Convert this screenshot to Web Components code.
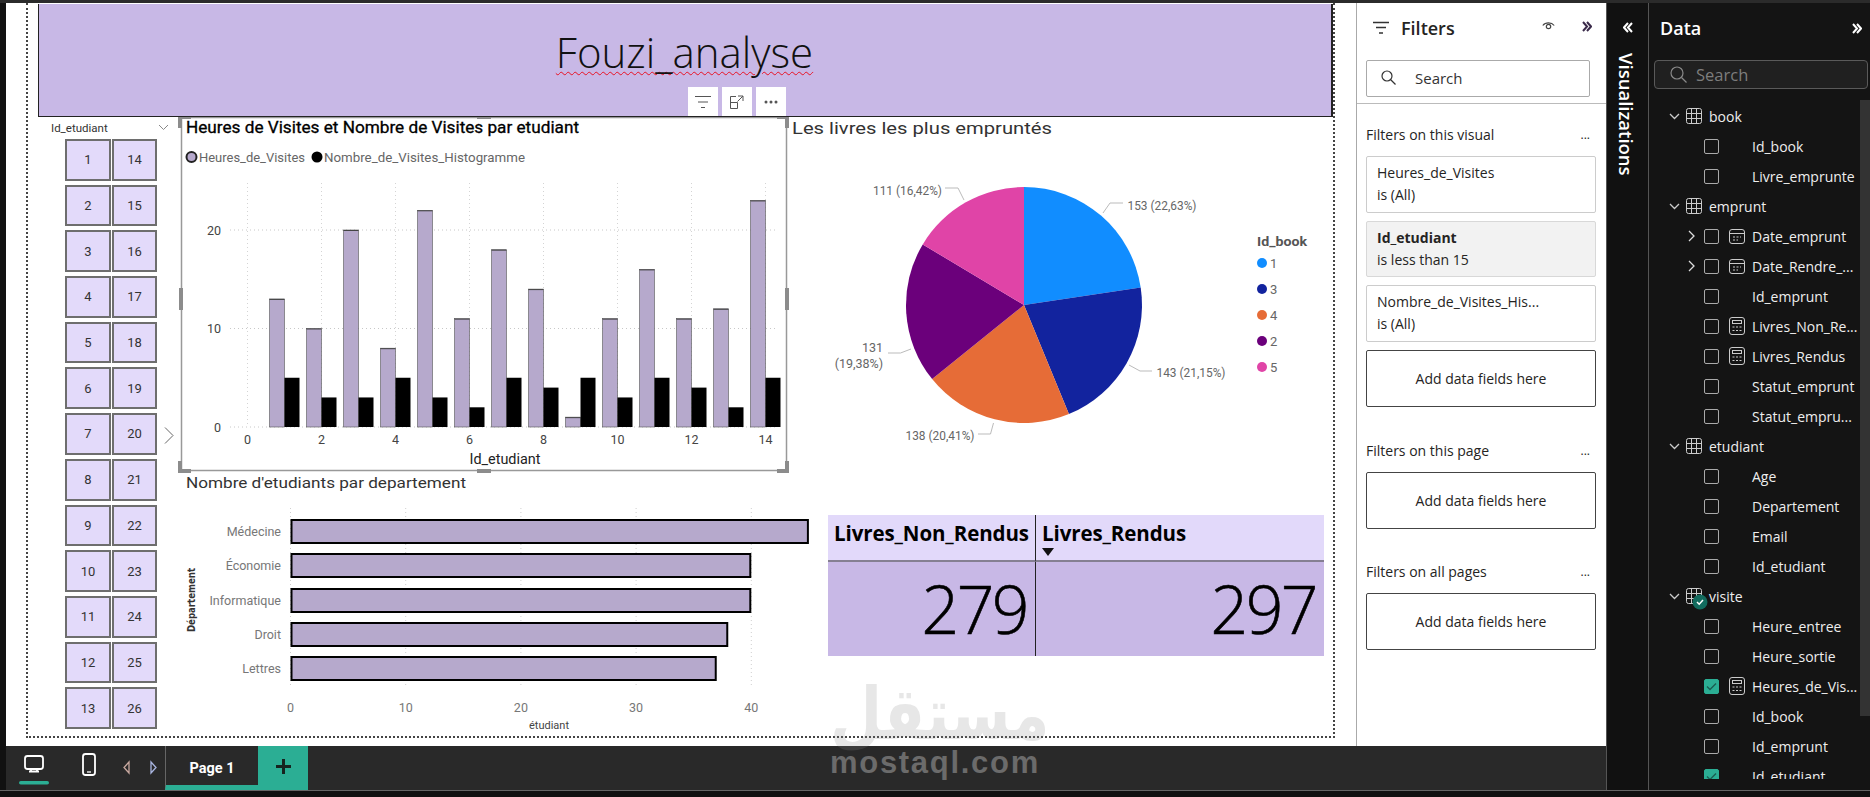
<!DOCTYPE html>
<html>
  <head>
    <meta charset="utf-8">
    <title>Fouzi_analyse</title>
    <style>
      html, body { margin: 0; padding: 0; background: #111; overflow: hidden; }
      body { width: 1870px; height: 797px; font-family: "Open Sans", "Liberation Sans", sans-serif; }
    </style>
  </head>
  <body>
    <pbi-app>
      <pbi-canvas slot="canvas"></pbi-canvas>
      <pbi-filters slot="filters"></pbi-filters>
      <pbi-status slot="status"></pbi-status>
      <pbi-viz-rail slot="rail"></pbi-viz-rail>
      <pbi-data slot="data">
        <pbi-table>book</pbi-table>
        <pbi-field>Id_book</pbi-field>
        <pbi-field>Livre_emprunte</pbi-field>
        <pbi-table>emprunt</pbi-table>
        <pbi-field icon="cal" expand>Date_emprunt</pbi-field>
        <pbi-field icon="cal" expand>Date_Rendre_...</pbi-field>
        <pbi-field>Id_emprunt</pbi-field>
        <pbi-field icon="calc">Livres_Non_Re...</pbi-field>
        <pbi-field icon="calc">Livres_Rendus</pbi-field>
        <pbi-field>Statut_emprunt</pbi-field>
        <pbi-field>Statut_empru...</pbi-field>
        <pbi-table>etudiant</pbi-table>
        <pbi-field>Age</pbi-field>
        <pbi-field>Departement</pbi-field>
        <pbi-field>Email</pbi-field>
        <pbi-field>Id_etudiant</pbi-field>
        <pbi-table badge>visite</pbi-table>
        <pbi-field>Heure_entree</pbi-field>
        <pbi-field>Heure_sortie</pbi-field>
        <pbi-field icon="calc" checked>Heures_de_Vis...</pbi-field>
        <pbi-field>Id_book</pbi-field>
        <pbi-field>Id_emprunt</pbi-field>
        <pbi-field checked>Id_etudiant</pbi-field>
      </pbi-data>
    </pbi-app>
  <script>
  const DIN = '"Roboto", "Liberation Sans", sans-serif';
  const UI = '"Open Sans", "Liberation Sans", sans-serif';

  function shadow (el, html) {
    const root = el.attachShadow({mode: 'open'});
    root.innerHTML = html;
    return root;
  }

  // svg text, w forces the width measured on the reference
  function txt (x, y, str, o) {
    o = o || {};
    return '<text x="' + x + '" y="' + y + '" dominant-baseline="central"' +
      ' font-size="' + (o.size || 12) + '" fill="' + (o.fill || '#666') + '"' +
      ' text-anchor="' + (o.anchor || 'start') + '"' +
      (o.weight ? ' font-weight="' + o.weight + '"' : '') +
      (o.w ? ' textLength="' + o.w + '" lengthAdjust="spacingAndGlyphs"' : '') +
      (o.extra || '') + '>' + str + '</text>';
  }

  function chevrons (dir, color) {
    var d = dir === 'right' ? 'M1 1l4 4.500-4 4.500M5 1l4 4.500-4 4.500' : 'M5 1L1 5.500l4 4.500M9 1L5 5.500l4 4.500';
    return '<svg style="display:block" width="10" height="11" viewBox="0 0 10 11" fill="none" stroke="' + color + '" stroke-width="2"><path d="' + d + '"/></svg>';
  }

  class PbiApp extends HTMLElement {
    constructor () {
      super();
      shadow(this, `
        <style>
          :host { display: block; position: relative; width: 1870px; height: 797px; background: #111; overflow: hidden; }
          .top { height: 3px; background: #2b2b2b; }
          .main { display: flex; height: 787px; border-bottom: 1px solid #666; box-sizing: content-box; }
          .left { width: 1606px; display: flex; flex-direction: column; }
          .upper { display: flex; height: 743px; background: #111; padding-left: 6px; }
          .mark { position: absolute; left: 830px; top: 684px; width: 209px; text-align: center; pointer-events: none; }
          .ar { font: bold 60px/60px "DejaVu Sans", sans-serif; color: #8a8a8a; opacity: .2; height: 60px; transform: scaleY(1.2); white-space: nowrap; }
          .en { font: bold 31px/30px "Liberation Sans", sans-serif; letter-spacing: 1.700px; color: #6b6b6b; margin-top: 4px; white-space: nowrap; }
        </style>
        <div class="top"></div>
        <div class="main">
          <div class="left">
            <div class="upper"><slot name="canvas"></slot><slot name="filters"></slot></div>
            <slot name="status"></slot>
          </div>
          <slot name="rail"></slot>
          <slot name="data"></slot>
        </div>
        <div class="mark"><div class="ar">مستقل</div><div class="en">mostaql.com</div></div>
      `);
    }
  }

  class PbiCanvas extends HTMLElement {
    constructor () {
      super();
      shadow(this, `
        <style>
          :host { display: block; width: 1350px; height: 743px; background: #fff; }
          .page { margin-left: 20px; width: 1309px; height: 735px; box-sizing: border-box; padding: 1px 0 0 10px;
                  border-left: 2px dotted #444; border-right: 2px dotted #444; border-bottom: 2px dotted #444; }
          .grid { display: grid; grid-template-columns: 143px 606px 41px 505px; grid-template-rows: 354px 44px 220px; }
          pbi-slicer { grid-column: 1; grid-row: 1 / 4; }
          pbi-column-chart { grid-column: 2; grid-row: 1; }
          pbi-pie-chart { grid-column: 3 / 5; grid-row: 1; }
          pbi-bar-chart { grid-column: 2 / 4; grid-row: 2 / 4; }
          pbi-matrix { grid-column: 4; grid-row: 3; }
        </style>
        <div class="page">
          <pbi-banner></pbi-banner>
          <div class="grid">
            <pbi-slicer></pbi-slicer>
            <pbi-column-chart></pbi-column-chart>
            <pbi-pie-chart></pbi-pie-chart>
            <pbi-bar-chart></pbi-bar-chart>
            <pbi-matrix></pbi-matrix>
          </div>
        </div>
      `);
    }
  }

  class PbiBanner extends HTMLElement {
    constructor () {
      super();
      shadow(this, `
        <style>
          :host { display: block; position: relative; height: 113px; box-sizing: border-box; background: #c8b8e6;
                  border: 1px solid #222; border-top: 0; border-right: 2px solid #222; }
          .title { text-align: center; padding: 21px 0 0 0; margin-left: -1px; font: 300 42px/54px ${UI}; color: #111; }
          .title span { text-decoration: underline wavy #e81123 1.200px; text-underline-offset: 3px; }
          .tools { position: absolute; left: 649px; bottom: 0; display: flex; gap: 4px; }
          .tools div { width: 30px; height: 29px; background: #fff; display: flex; align-items: center; justify-content: center; }
        </style>
        <div class="title"><span>Fouzi_analyse</span></div>
        <div class="tools">
          <div><svg width="16" height="14" fill="none" stroke="#555"><path d="M0 1.500h16M3 7h10M6 12.500h4"/></svg></div>
          <div><svg width="16" height="16" fill="none" stroke="#555"><path d="M7 2.500H1.500v12h7v-6h-7M9 2h5v5M14 2L8.500 7.500"/></svg></div>
          <div><svg width="14" height="4" fill="#555"><circle cx="2" cy="2" r="1.500"/><circle cx="7" cy="2" r="1.500"/><circle cx="12" cy="2" r="1.500"/></svg></div>
        </div>
      `);
    }
  }

  class PbiSlicer extends HTMLElement {
    constructor () {
      super();
      var tiles = '';
      for (let i = 1; i <= 26; i++) tiles += '<div class="tile">' + i + '</div>';
      shadow(this, `
        <style>
          :host { display: block; position: relative; font-family: ${DIN}; }
          .head { height: 22px; padding-left: 13px; font-size: 11.500px; line-height: 22px; color: #333; }
          .chev { position: absolute; left: 120px; top: 7px; }
          .tiles { display: grid; grid-auto-flow: column; grid-template-columns: 46px 45px; grid-template-rows: repeat(13, 1fr);
                   column-gap: 1px; row-gap: 4px; height: 590px; width: 92px; margin-left: 27px; }
          .tile { background: #e3dafa; border: 2px solid #6e6e6e; box-sizing: border-box; display: flex; align-items: center; justify-content: center;
                  font-size: 13px; color: #333; }
          .more { position: absolute; left: 126px; top: 310px; }
        </style>
        <div class="head">Id_etudiant</div>
        <svg class="chev" width="11" height="7" fill="none" stroke="#888"><path d="M1 1l4.500 4.500L10 1"/></svg>
        <div class="tiles">${tiles}</div>
        <svg class="more" width="10" height="17" fill="none" stroke="#666"><path d="M1 .5l8 8-8 8"/></svg>
      `);
    }
  }

  class PbiColumnChart extends HTMLElement {
    constructor () {
      super();
      const hours = [13,10,20,8,22,11,18,14,1,11,16,11,12,23];
      const visits = [5,3,3,5,3,2,5,4,5,3,5,4,2,5];
      const x0 = 247.5, unit = 37, base = 427, yu = 9.85;
      var s = '';
      for (let i = 0; i <= 14; i += 2) {
        var gx = x0 + i * unit;
        s += '<line x1="' + gx + '" x2="' + gx + '" y1="183" y2="' + base + '" stroke="#d4d4d4" stroke-dasharray="1 3"/>';
        s += txt(gx, 439, String(i), {size: 12.5, anchor: 'middle', fill: '#444'});
      }
      [0, 10, 20].forEach(function (v) {
        var gy = base - v * yu;
        s += '<line x1="230" x2="778" y1="' + gy + '" y2="' + gy + '" stroke="#c8c8c8" stroke-dasharray="1 3"/>';
        s += txt(221, gy, String(v), {size: 12.5, anchor: 'end', fill: '#444'});
      });
      hours.forEach(function (h, i) {
        var cx = x0 + (i + 1) * unit;
        var top = base - h * yu;
        s += '<rect x="' + (cx - 15) + '" y="' + top + '" width="15" height="' + (h * yu) + '" fill="#b6a9cc" stroke="#555" stroke-width=".6"/>';
        s += '<line x1="' + (cx - 15) + '" x2="' + cx + '" y1="' + (top + .5) + '" y2="' + (top + .5) + '" stroke="#444"/>';
        var vh = visits[i] * yu;
        s += '<rect x="' + cx + '" y="' + (base - vh) + '" width="15" height="' + vh + '" fill="#000"/>';
      });
      s += txt(186, 127, 'Heures de Visites et Nombre de Visites par etudiant', {size: 16, fill: '#000', w: 393, extra: ' stroke="#000" stroke-width=".3"'});
      s += '<circle cx="191.500" cy="157" r="5" fill="#b6a9cc" stroke="#222" stroke-width="2"/>';
      s += txt(199, 157, 'Heures_de_Visites', {size: 13, w: 106});
      s += '<circle cx="317" cy="157" r="5.500" fill="#000"/>';
      s += txt(324, 157, 'Nombre_de_Visites_Histogramme', {size: 13, w: 201});
      s += txt(505, 459, 'Id_etudiant', {size: 14, fill: '#222', anchor: 'middle', w: 71});
      // selection frame and its handles
      s += '<rect x="181.500" y="117.500" width="605" height="353" fill="none" stroke="#999" stroke-width="1.500"/>';
      s += '<path d="M180 128v-11h11M777 117h10v11M180 461v10h11M777 471h10v-10" fill="none" stroke="#8c8c8c" stroke-width="4"/>';
      s += '<path d="M477 117h14M477 471h14M181 288v22M787 288v22" fill="none" stroke="#8c8c8c" stroke-width="4"/>';
      shadow(this, `
        <style>
          :host { display: block; font-family: ${DIN}; }
          svg { display: block; overflow: visible; }
        </style>
        <svg width="606" height="354" viewBox="181 117 606 354">${s}</svg>
      `);
    }
  }

  class PbiPieChart extends HTMLElement {
    constructor () {
      super();
      const cx = 1024, cy = 305, r = 118;
      const slices = [
        [22.63, '#118dff'], [21.15, '#12239e'], [20.41, '#e66c37'], [19.38, '#6b007b'], [16.42, '#e044a7']
      ];
      var total = slices.reduce(function (a, b) { return a + b[0]; }, 0);
      var a = -Math.PI / 2, s = '';
      slices.forEach(function (p) {
        var b = a + p[0] / total * Math.PI * 2;
        var large = b - a > Math.PI ? 1 : 0;
        s += '<path fill="' + p[1] + '" d="M' + cx + ' ' + cy + 'L' + (cx + r * Math.cos(a)).toFixed(2) + ' ' + (cy + r * Math.sin(a)).toFixed(2) +
          'A' + r + ' ' + r + ' 0 ' + large + ' 1 ' + (cx + r * Math.cos(b)).toFixed(2) + ' ' + (cy + r * Math.sin(b)).toFixed(2) + 'Z"/>';
        a = b;
      });
      s += '<g fill="none" stroke="#bbb"><path d="M1103 213l7-10h13"/><path d="M1129 365l11 6h12"/><path d="M978 434h12.500l3-11"/><path d="M888 353h12.500l10.500-4"/><path d="M945 188h13l6 12"/></g>';
      var lab = {size: 12.500, fill: '#666'};
      s += txt(1127.5, 205, '153 (22,63%)', Object.assign({w: 69}, lab));
      s += txt(1156.5, 372, '143 (21,15%)', Object.assign({w: 69}, lab));
      s += txt(905.5, 435, '138 (20,41%)', Object.assign({w: 69}, lab));
      s += txt(883, 347, '131', Object.assign({anchor: 'end'}, lab));
      s += txt(883, 363, '(19,38%)', Object.assign({anchor: 'end'}, lab));
      s += txt(873, 190, '111 (16,42%)', Object.assign({w: 69}, lab));
      s += txt(792, 128, 'Les livres les plus empruntés', {size: 16.500, fill: '#333', w: 260});
      s += txt(1257, 241, 'Id_book', {size: 13, fill: '#555', weight: 700, w: 50});
      [['1', '#118dff'], ['3', '#12239e'], ['4', '#e66c37'], ['2', '#6b007b'], ['5', '#e044a7']].forEach(function (l, i) {
        var y = 263 + i * 26;
        s += '<circle cx="1262" cy="' + y + '" r="5" fill="' + l[1] + '"/>';
        s += txt(1270, y, l[0], {size: 13, fill: '#666'});
      });
      shadow(this, `
        <style>
          :host { display: block; font-family: ${DIN}; }
          svg { display: block; }
        </style>
        <svg width="546" height="354" viewBox="787 117 546 354">${s}</svg>
      `);
    }
  }

  class PbiBarChart extends HTMLElement {
    constructor () {
      super();
      const x0 = 290.5, unit = 11.52;
      const rows = [['Médecine', 45, 519], ['Économie', 40, 553], ['Informatique', 40, 588], ['Droit', 38, 622], ['Lettres', 37, 656]];
      var s = txt(186, 483, "Nombre d'etudiants par departement", {size: 15.500, fill: '#333', w: 280});
      [0, 10, 20, 30, 40].forEach(function (v) {
        var gx = x0 + v * unit;
        s += '<line x1="' + gx + '" x2="' + gx + '" y1="508" y2="687" stroke="#cfcfcf" stroke-dasharray="1 3"/>';
        s += txt(gx, 707, String(v), {size: 12.500, anchor: 'middle', fill: '#777'});
      });
      rows.forEach(function (r) {
        s += '<rect x="' + (x0 + 1) + '" y="' + (r[2] + 1) + '" width="' + (r[1] * unit - 2) + '" height="23" fill="#b6a9cc" stroke="#000" stroke-width="2"/>';
        s += txt(281, r[2] + 12.5, r[0], {size: 12.500, anchor: 'end', fill: '#777'});
      });
      s += txt(549, 725, 'étudiant', {size: 10.500, anchor: 'middle', fill: '#444', w: 40});
      s += '<text x="191" y="600" dominant-baseline="central" text-anchor="middle" font-size="10" font-weight="700" fill="#333" font-family="DejaVu Sans, sans-serif" transform="rotate(-90 191 600)" textLength="64" lengthAdjust="spacingAndGlyphs">Département</text>';
      shadow(this, `
        <style>
          :host { display: block; font-family: ${DIN}; }
          svg { display: block; overflow: visible; }
        </style>
        <svg width="647" height="264" viewBox="181 471 647 264">${s}</svg>
      `);
    }
  }

  class PbiMatrix extends HTMLElement {
    constructor () {
      super();
      shadow(this, `
        <style>
          :host { display: block; width: 496px; height: 141px; font-family: ${UI}; color: #000; }
          .m { display: grid; grid-template-columns: 207px 289px; grid-template-rows: 47px 94px; height: 141px; }
          .h { background: #e2d9fa; border-bottom: 2px solid #857f92; box-sizing: border-box; padding: 3px 0 0 6px;
               font-size: 20.500px; line-height: 30px; font-weight: 700; letter-spacing: -.1px; white-space: nowrap; position: relative; overflow: hidden; }
          .v { background: #c8b8e6; text-align: right; padding-right: 8px; font-size: 66px; line-height: 92px; font-weight: 300; letter-spacing: -2.500px; -webkit-text-stroke: .6px #000; }
          .sep { border-left: 1px solid #222; }
          .h svg { position: absolute; left: 6px; bottom: 4px; }
        </style>
        <div class="m">
          <div class="h">Livres_Non_Rendus</div>
          <div class="h sep">Livres_Rendus<svg width="12" height="8" fill="#111"><path d="M0 0h12L6 8z"/></svg></div>
          <div class="v">279</div>
          <div class="v sep">297</div>
        </div>
      `);
    }
  }

  class PbiFilterCard extends HTMLElement {
    constructor () {
      super();
      var on = this.hasAttribute('active');
      shadow(this, `
        <style>
          :host { display: block; height: 56.500px; box-sizing: border-box; border: 1px solid ${on ? '#d8d8d8' : '#ccc'}; border-radius: 2px;
                  padding: 5px 10px; background: ${on ? '#f2f2f2' : '#fff'}; font-size: 14px; line-height: 22px; color: #252423; white-space: nowrap; }
          b { font-weight: 700; }
        </style>
        <div>${on ? '<b><slot name="name"></slot></b>' : '<slot name="name"></slot>'}</div>
        <div><slot name="value"></slot></div>
      `);
    }
  }

  class PbiDropCard extends HTMLElement {
    constructor () {
      super();
      shadow(this, `
        <style>
          :host { display: flex; height: 57px; box-sizing: border-box; border: 1px solid #444; border-radius: 2px;
                  align-items: center; justify-content: center; font-size: 14px; color: #252423; background: #fff; }
        </style>
        <slot></slot>
      `);
    }
  }

  class PbiFilterSection extends HTMLElement {
    constructor () {
      super();
      shadow(this, `
        <style>
          :host { display: block; font-size: 14px; color: #252423; }
          .l { display: flex; justify-content: space-between; height: 20px; line-height: 20px; margin-bottom: 11px; width: 224px; }
          .dots { font-size: 12px; line-height: 20px; letter-spacing: 0; }
          .c { display: flex; flex-direction: column; gap: 8px; width: 230px; }
        </style>
        <div class="l"><span>${this.getAttribute('label')}</span><span class="dots">...</span></div>
        <div class="c"><slot></slot></div>
      `);
    }
  }

  class PbiFilters extends HTMLElement {
    constructor () {
      super();
      shadow(this, `
        <style>
          :host { display: block; width: 250px; height: 743px; box-sizing: border-box; background: #fff; border-left: 1px solid #aaa; font-family: ${UI}; color: #252423; }
          .head { height: 57px; position: relative; display: flex; align-items: center; padding-left: 16px; box-sizing: border-box; padding-bottom: 8px; }
          .head .t { margin-left: 12px; font-size: 18px; font-weight: 600; }
          .eye { position: absolute; left: 185px; top: 18px; }
          .dbl { position: absolute; left: 225px; top: 18px; }
          .search { margin-left: 9px; width: 224px; height: 37px; box-sizing: border-box; border: 1px solid #aaa; border-radius: 2px;
                    display: flex; align-items: center; padding: 0 0 2px 14px; font-size: 15px; color: #333; gap: 19px; }
          .sep { height: 1px; background: #bbb; margin-top: 6px; }
          .body { padding: 21px 0 0 9px; }
          pbi-filter-section + pbi-filter-section { display: block; margin-top: 34px; }
          pbi-filter-section + pbi-filter-section + pbi-filter-section { margin-top: 33px; }
        </style>
        <div class="head">
          <svg width="16" height="14" fill="none" stroke="#333" stroke-width="1.300"><path d="M0 1.500h16M3 6.500h10M6 12h4"/></svg>
          <span class="t">Filters</span>
          <svg class="eye" width="13" height="10" viewBox="0 0 13 10" fill="none" stroke="#444" stroke-width="1.200"><path d="M.8 4.500C3.500 1 9.500 1 12.200 4.500"/><circle cx="6.500" cy="5.500" r="2.200"/></svg>
          <span class="dbl">${chevrons('right', '#3a2a4a')}</span>
        </div>
        <div class="search">
          <svg width="15" height="15" fill="none" stroke="#333" stroke-width="1.200"><circle cx="6" cy="6" r="5"/><path d="M9.500 9.500l5 5"/></svg>
          <span>Search</span>
        </div>
        <div class="sep"></div>
        <div class="body">
          <pbi-filter-section label="Filters on this visual">
            <pbi-filter-card><span slot="name">Heures_de_Visites</span><span slot="value">is (All)</span></pbi-filter-card>
            <pbi-filter-card active><span slot="name">Id_etudiant</span><span slot="value">is less than 15</span></pbi-filter-card>
            <pbi-filter-card><span slot="name">Nombre_de_Visites_His...</span><span slot="value">is (All)</span></pbi-filter-card>
            <pbi-drop-card>Add data fields here</pbi-drop-card>
          </pbi-filter-section>
          <pbi-filter-section label="Filters on this page"><pbi-drop-card>Add data fields here</pbi-drop-card></pbi-filter-section>
          <pbi-filter-section label="Filters on all pages"><pbi-drop-card>Add data fields here</pbi-drop-card></pbi-filter-section>
        </div>
      `);
    }
  }

  class PbiStatus extends HTMLElement {
    constructor () {
      super();
      shadow(this, `
        <style>
          :host { display: flex; width: 1606px; height: 44px; background: #292929; box-sizing: border-box; border-left: 6px solid #111; font-family: ${DIN}; }
          .icons { width: 159px; }
          svg { display: block; }
          .tab { width: 93px; box-sizing: border-box; border-left: 1px solid #666; border-bottom: 5px solid #2bae94; color: #fff; font-weight: 700; font-size: 14.500px;
                 display: flex; align-items: center; justify-content: center; padding-top: 5px; }
          .add { width: 50px; background: #2bae94; display: flex; align-items: center; justify-content: center; padding-bottom: 4px; box-sizing: border-box; }
        </style>
        <div class="icons">
          <svg width="159" height="44" viewBox="6 746 159 44" fill="none" stroke="#fff" stroke-width="1.800">
            <rect x="25" y="756" width="18" height="13" rx="2.500"/>
            <path d="M29 771.500h10M31 769v2M37 769v2"/>
            <rect x="19" y="781" width="30" height="3.500" rx="1.750" fill="#2bae94" stroke="none"/>
            <rect x="83" y="754" width="12" height="21" rx="2.500"/>
            <path d="M87 772h4" stroke-width="1.300"/>
            <path d="M129 762l-5 5.500 5 5.500z" stroke="#c9a9a0" stroke-width="1.300"/>
            <path d="M151 762l5 5.500-5 5.500z" stroke="#a9b5e0" stroke-width="1.300"/>
          </svg>
        </div>
        <div class="tab">Page 1</div>
        <div class="add"><svg width="15" height="15" fill="#16241f"><path d="M6 0h3v6h6v3H9v6H6V9H0V6h6z"/></svg></div>
      `);
    }
  }

  class PbiVizRail extends HTMLElement {
    constructor () {
      super();
      shadow(this, `
        <style>
          :host { display: block; width: 43px; height: 787px; box-sizing: border-box; background: #111; border-right: 1px solid #555; border-left: 1px solid #555; color: #fff; position: relative; font-family: ${UI}; }
          .ico { position: absolute; left: 16px; top: 19px; }
          .lbl { position: absolute; left: 8px; top: 50px; writing-mode: vertical-rl; font-size: 18.500px; font-weight: 600; line-height: 22px; }
        </style>
        <div class="ico">${chevrons('left', '#fff')}</div>
        <div class="lbl">Visualizations</div>
      `);
    }
  }

  class PbiData extends HTMLElement {
    constructor () {
      super();
      shadow(this, `
        <style>
          :host { display: block; width: 221px; height: 787px; background: #141414; color: #eee; position: relative; font-family: ${UI}; }
          .head { height: 57px; box-sizing: border-box; padding: 11px 0 0 11px; font-size: 18px; font-weight: 600; color: #fff; line-height: 28px; }
          .dbl { position: absolute; left: 203px; top: 20px; }
          .search { margin-left: 5px; width: 214px; height: 29px; box-sizing: border-box; border: 1px solid #5a5a5a; border-radius: 4px; background: #202020;
                    display: flex; align-items: center; padding-left: 15px; gap: 9px; font-size: 16.500px; color: #7d7d7d; }
          .tree { height: 678px; margin-top: 12px; overflow: hidden; width: 210px; }
          .bar { position: absolute; right: 0; top: 97px; width: 10px; height: 616px; background: #333; }
        </style>
        <div class="head">Data</div>
        <span class="dbl">${chevrons('right', '#fff')}</span>
        <div class="search">
          <svg width="17" height="17" fill="none" stroke="#8a8a8a" stroke-width="1.200"><circle cx="7" cy="7" r="6"/><path d="M11.500 11.500l5 5"/></svg>
          <span>Search</span>
        </div>
        <div class="tree"><slot></slot></div>
        <div class="bar"></div>
      `);
    }
  }

  class PbiTable extends HTMLElement {
    constructor () {
      super();
      var badge = this.hasAttribute('badge') ? '<svg class="badge" width="16" height="16"><circle cx="8" cy="8" r="7.500" fill="#126b5e"/><path d="M5 8l2.200 2.200L11 6" fill="none" stroke="#fff" stroke-width="1.500"/></svg>' : '';
      shadow(this, `
        <style>
          :host { display: flex; height: 30px; align-items: center; position: relative; font-size: 14px; color: #eee; }
          .c { margin-left: 20px; width: 11px; }
          .t { margin-left: 6px; width: 16px; height: 16px; }
          .n { margin-left: 7px; }
          .badge { position: absolute; left: 43px; top: 13px; }
        </style>
        <svg class="c" height="7" viewBox="0 0 11 7" fill="none" stroke="#ccc" stroke-width="1.300"><path d="M1 1l4.500 4.500L10 1"/></svg>
        <svg class="t" viewBox="0 0 16 16" fill="none" stroke="#ccc"><rect x=".5" y=".5" width="15" height="15" rx="2"/><path d="M5.500 .5v15M10.500 .5v15M.5 5.500h15M.5 10.500h15"/></svg>
        ${badge}
        <span class="n"><slot></slot></span>
      `);
    }
  }

  class PbiField extends HTMLElement {
    constructor () {
      super();
      var icon = this.getAttribute('icon');
      var checked = this.hasAttribute('checked');
      var glyph = '';
      if (icon === 'cal') {
        glyph = '<svg width="16" height="16" viewBox="0 0 16 16" fill="none" stroke="#ccc"><rect x=".5" y="1.500" width="15" height="14" rx="2.500"/><path d="M.5 5.500h15"/><path stroke-dasharray="2 1.500" d="M4 9h8M4 12h5"/></svg>';
      } else if (icon === 'calc') {
        glyph = '<svg width="16" height="18" viewBox="0 0 16 18" fill="none" stroke="#ccc"><rect x=".5" y=".5" width="15" height="17" rx="2.500"/><rect x="3.500" y="3.500" width="9" height="3"/><path stroke-dasharray="2 1.500" d="M3.500 10h9M3.500 13.500h9"/></svg>';
      }
      shadow(this, `
        <style>
          :host { display: flex; height: 30px; align-items: center; font-size: 14px; color: #eee; white-space: nowrap; }
          .e { width: 7px; margin-left: 39px; }
          .box { margin-left: 9px; width: 15px; height: 15px; box-sizing: border-box; border: 1px solid #aaa; border-radius: 2px; display: flex; align-items: center; justify-content: center; }
          .box.on { background: #2bae94; border-color: #2bae94; }
          .g { width: 16px; margin-left: 10px; height: 18px; display: flex; align-items: center; }
          .n { margin-left: 7px; }
        </style>
        <svg class="e" height="12" viewBox="0 0 7 12" fill="none" stroke="#ddd" stroke-width="1.300">${this.hasAttribute('expand') ? '<path d="M1 1l5 5-5 5"/>' : ''}</svg>
        <span class="box ${checked ? 'on' : ''}">${checked ? '<svg width="11" height="9" fill="none" stroke="#1a5c50" stroke-width="1.300"><path d="M1 4.500l3 3 6-6"/></svg>' : ''}</span>
        <span class="g">${glyph}</span>
        <span class="n"><slot></slot></span>
      `);
    }
  }

  customElements.define('pbi-filter-card', PbiFilterCard);
  customElements.define('pbi-drop-card', PbiDropCard);
  customElements.define('pbi-filter-section', PbiFilterSection);
  customElements.define('pbi-banner', PbiBanner);
  customElements.define('pbi-slicer', PbiSlicer);
  customElements.define('pbi-column-chart', PbiColumnChart);
  customElements.define('pbi-pie-chart', PbiPieChart);
  customElements.define('pbi-bar-chart', PbiBarChart);
  customElements.define('pbi-matrix', PbiMatrix);
  customElements.define('pbi-canvas', PbiCanvas);
  customElements.define('pbi-filters', PbiFilters);
  customElements.define('pbi-status', PbiStatus);
  customElements.define('pbi-viz-rail', PbiVizRail);
  customElements.define('pbi-table', PbiTable);
  customElements.define('pbi-field', PbiField);
  customElements.define('pbi-data', PbiData);
  customElements.define('pbi-app', PbiApp);
  </script>
  </body>
</html>
